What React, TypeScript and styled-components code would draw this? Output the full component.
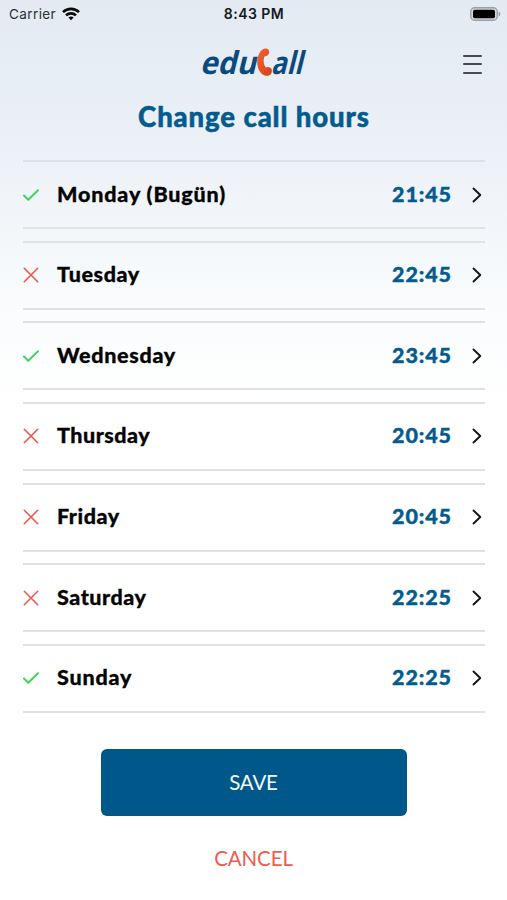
import React from "react";
import styled, { createGlobalStyle } from "styled-components";

const GlobalStyle = createGlobalStyle`
  * { box-sizing: border-box; }
  body { margin: 0; background: #fff; }
`;

const Screen = styled.main`
  width: 507px;
  height: 900px;
  overflow: hidden;
  display: flex;
  flex-direction: column;
  background: linear-gradient(180deg, #e3eaf1 0px, #ebf0f7 130px, #f1f5f9 210px, #fafcfd 310px, #fff 410px);
  font-family: Lato, "Open Sans", sans-serif;
`;

const StatusBar = styled.div`
  height: 28px;
  padding: 0 6px 0 9px;
  display: grid;
  grid-template-columns: 1fr auto 1fr;
  align-items: center;
  font-family: Inter, sans-serif;
  font-size: 13.5px;
  color: #2b3036;
`;

const Carrier = styled.div`
  display: flex;
  align-items: center;
  gap: 6px;
  letter-spacing: 0.4px;
`;

const Clock = styled.div`
  font-weight: 600;
  font-size: 14px;
  letter-spacing: 0.45px;
  color: #16191c;
  margin-left: -2px;
  margin-top: -1px;
`;

const Battery = styled.svg`
  justify-self: end;
  display: block;
  margin-top: -1px;
`;

const Header = styled.header`
  height: 66px;
  padding: 0 25px 0 24px;
  display: grid;
  grid-template-columns: 1fr 108px 1fr;
  align-items: center;
`;

const Logo = styled.svg`
  grid-column: 2;
  display: block;
  overflow: visible;
  margin-top: 4px;
`;

const MenuButton = styled.button`
  justify-self: end;
  width: 19px;
  height: 19px;
  margin-top: 6px;
  padding: 0;
  border: 0;
  background: none;
  display: flex;
  flex-direction: column;
  justify-content: space-between;
`;

const MenuLine = styled.span`
  height: 2px;
  width: 100%;
  border-radius: 1px;
  background: #454b51;
`;

const Title = styled.h1`
  margin: 0;
  height: 66px;
  padding-top: 6px;
  padding-left: 1px;
  text-align: center;
  color: #045b8e;
  font-size: 27.5px;
  line-height: 34px;
  font-weight: 900;
  letter-spacing: 0.9px;
  -webkit-text-stroke: 0.5px currentColor;
`;

const DayList = styled.ul`
  margin: 0;
  padding: 0 22px 0 23px;
  list-style: none;
  display: flex;
  flex-direction: column;
  gap: 11.65px;
`;

const DayRow = styled.li`
  height: 69px;
  padding-bottom: 2px;
  border-top: 2px solid #dfe2e4;
  border-bottom: 2px solid #dfe2e4;
  display: grid;
  grid-template-columns: 34px 1fr auto 34px;
  align-items: center;
`;

const DayName = styled.span<{ $tracking: number }>`
  color: #050505;
  font-size: 21.5px;
  line-height: 28px;
  font-weight: 900;
  letter-spacing: ${(p) => p.$tracking}px;
  -webkit-text-stroke: 0.3px currentColor;
`;

const Time = styled.span`
  color: #045b8e;
  font-size: 21.5px;
  line-height: 28px;
  font-weight: 900;
  letter-spacing: 0.85px;
  margin-right: -0.85px;
  -webkit-text-stroke: 0.4px currentColor;
`;

const Chevron = styled.svg`
  justify-self: end;
  margin-right: 3px;
  margin-top: 2px;
`;

const StatusIcon = styled.svg`
  display: block;
  margin-top: 2px;
`;

const Actions = styled.footer`
  padding-top: 36px;
  display: flex;
  flex-direction: column;
  align-items: center;
  gap: 26px;
`;

const ActionButton = styled.button<{ $primary?: boolean }>`
  width: 306px;
  height: ${(p) => (p.$primary ? 67 : 32)}px;
  padding: 0;
  border: 0;
  border-radius: 6px;
  background: ${(p) => (p.$primary ? "#00588a" : "transparent")};
  color: ${(p) => (p.$primary ? "#f4f9fc" : "#f15c4c")};
  font-family: inherit;
  font-size: 20.5px;
  letter-spacing: ${(p) => (p.$primary ? -0.2 : -0.1)}px;
`;

type Day = { name: string; time: string; active: boolean; tracking: number };

const days: Day[] = [
  { name: "Monday (Bugün)", time: "21:45", active: true, tracking: 0.84 },
  { name: "Tuesday", time: "22:45", active: false, tracking: 0.6 },
  { name: "Wednesday", time: "23:45", active: true, tracking: 0.68 },
  { name: "Thursday", time: "20:45", active: false, tracking: 0.5 },
  { name: "Friday", time: "20:45", active: false, tracking: 0.55 },
  { name: "Saturday", time: "22:25", active: false, tracking: 0.55 },
  { name: "Sunday", time: "22:25", active: true, tracking: 0.8 },
];

function DayStatus({ active }: { active: boolean }) {
  return (
    <StatusIcon width="16" height="16" viewBox="0 0 16 16" fill="none" strokeLinecap="round" strokeLinejoin="round">
      {active ? (
        <path d="M1 8.5 5.3 12.7 15 3.2" stroke="#42d45c" strokeWidth="2" />
      ) : (
        <path d="M1.3 1.3 14.7 14.7M14.7 1.3 1.3 14.7" stroke="#f2564a" strokeWidth="1.6" />
      )}
    </StatusIcon>
  );
}

export default function App() {
  return (
    <Screen>
      <GlobalStyle />
      <StatusBar>
        <Carrier>
          Carrier
          <svg width="18" height="14" viewBox="0 0 18 14" fill="none" stroke="#090b0d" strokeWidth="2.6">
            <path d="M1 5.2C5.5.7 12.5.7 17 5.2" />
            <path d="M4 8.4C6.8 5.7 11.2 5.7 14 8.4" />
            <path d="M6.4 10.6C7.9 9.2 10.1 9.2 11.6 10.6L9 13.3Z" fill="#090b0d" stroke="none" />
          </svg>
        </Carrier>
        <Clock>8:43 PM</Clock>
        <Battery width="31" height="14" viewBox="0 0 31 14">
          <rect x="0.8" y="0.8" width="26.4" height="12.4" rx="3.8" fill="#d5d9dc" stroke="#9ca0a4" strokeWidth="1.4" />
          <rect x="3" y="2.8" width="22" height="8.4" rx="1.8" fill="#000" />
          <path d="M28.6 4.5C31 5.3 31 8.7 28.6 9.5Z" fill="#9ca0a4" />
        </Battery>
      </StatusBar>
      <Header>
        <Logo width="108" height="34" viewBox="0 0 108 34">
          <defs>
            <linearGradient id="handset" x1="0" y1="0" x2="1" y2="1">
              <stop offset="0" stopColor="#f0642a" />
              <stop offset="1" stopColor="#d8411c" />
            </linearGradient>
          </defs>
          <g fill="#0b4a7d" fontFamily="Open Sans, sans-serif" fontWeight="700" fontSize="31.5" transform="translate(6.9 0) skewX(-14)">
            <text x="0.8" y="28" textLength="56" lengthAdjust="spacingAndGlyphs">edu</text>
            <text x="71.8" y="28" textLength="31.5" lengthAdjust="spacingAndGlyphs">all</text>
          </g>
          <path
            transform="translate(0.2 1.4)"
            d="M65.5 1.2C68.2.8 70.2 2.4 70 4.9C69.8 7.5 68 9 65.2 9C63.8 12.8 64.2 16.8 66.6 20.2C68.7 18.9 72 19.9 72.6 22.4C73.2 25.2 71.5 28 69 28.4C64.3 29 60.2 25.2 58.7 19.8C56.7 12.5 59.4 2.9 65.5 1.2Z"
            fill="url(#handset)"
          />
        </Logo>
        <MenuButton aria-label="Menu">
          <MenuLine />
          <MenuLine />
          <MenuLine />
        </MenuButton>
      </Header>
      <Title>Change call hours</Title>
      <DayList>
        {days.map((day) => (
          <DayRow key={day.name}>
            <DayStatus active={day.active} />
            <DayName $tracking={day.tracking}>{day.name}</DayName>
            <Time>{day.time}</Time>
            <Chevron width="10" height="16" viewBox="0 0 10 16" fill="none" stroke="#161616" strokeWidth="1.9" strokeLinecap="round" strokeLinejoin="round">
              <path d="M1.5 1.5 8.3 8 1.5 14.5" />
            </Chevron>
          </DayRow>
        ))}
      </DayList>
      <Actions>
        <ActionButton $primary>SAVE</ActionButton>
        <ActionButton>CANCEL</ActionButton>
      </Actions>
    </Screen>
  );
}
